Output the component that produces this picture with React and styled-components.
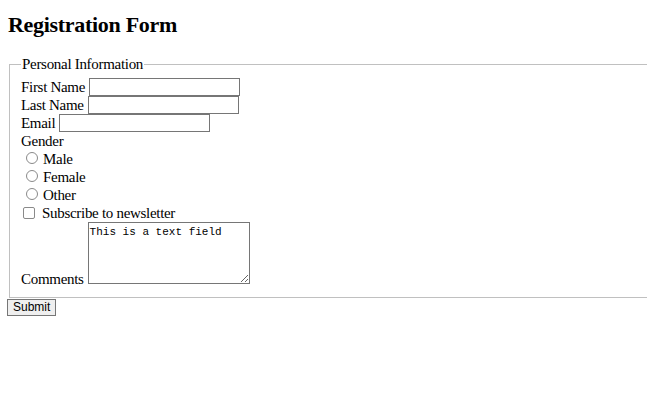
import React from 'react'
import styled, {createGlobalStyle} from 'styled-components'

const Global = createGlobalStyle`
  html, body{
    margin: 0;
    background: #ffffff;
    overflow: hidden;
  }
  body{
    padding: 12px 0 0 7px;
    font-family: "Liberation Serif", "Times New Roman", serif;
    font-size: 15px;
    letter-spacing: -0.3px;
    color: #000000;
  }
`
const Title = styled.h2`
  margin: 0 0 17px 1px;
  font-size: 22px;
  line-height: 26px;
  font-weight: 700;
  letter-spacing: -0.3px;
`
const Fieldset = styled.fieldset`
  width: 700px;
  margin: 0 0 0 2px;
  padding: 5px 11px 13px 11px;
  border: 1px solid #c0c0c0;
  border-right: none;
  box-sizing: border-box;
`
const Legend = styled.legend`
  padding: 0 1px;
  line-height: 18px;
`
const Row = styled.div`
  display: flex;
  align-items: ${p => p.$bottom ? 'flex-end' : 'center'};
  gap: 4px;
  min-height: 18px;
  line-height: 18px;
`
const TextInput = styled.input`
  box-sizing: border-box;
  width: ${p => p.$w || 151}px;
  height: 18px;
  margin: 0;
  padding: 0 2px;
  border: 1px solid #767676;
  font: inherit;
  background: #fff;
`
const Choice = styled.label`
  display: flex;
  align-items: flex-start;
  height: 18px;
  line-height: 18px;
  padding-left: ${p => p.$box ? 2 : 5}px;
  gap: ${p => p.$box ? 7 : 5}px;
`
const Radio = styled.input`
  appearance: none;
  box-sizing: border-box;
  flex: none;
  width: 12px;
  height: 12px;
  margin: 2px 0 0 0;
  border: 1px solid #8a8a8a;
  border-radius: 50%;
  background: #fff;
`
const Check = styled(Radio)`
  margin-top: 3px;
  border-radius: 2px;
`
const Comments = styled.textarea`
  box-sizing: border-box;
  width: 162px;
  height: 62px;
  margin: 0;
  padding: 3px 1px;
  border: 1px solid #767676;
  font-family: "Liberation Mono", "Courier New", monospace;
  font-size: 11px;
  line-height: 13px;
  letter-spacing: 0;
  resize: both;
`
const Label = styled.span`
  line-height: 18px;
  margin-bottom: ${p => p.$bottom ? '-4px' : '0'};
`
const SubmitButton = styled.button`
  display: block;
  margin: 1px 0 0 0;
  height: 17px;
  padding: 0 5px;
  border: 1px solid #767676;
  border-radius: 0;
  background: #efefef;
  font-family: "Liberation Sans", Arial, sans-serif;
  font-size: 12px;
  line-height: 15px;
  letter-spacing: 0;
  color: #000;
`

export default function App(){
  return(
    <>
      <Global/>
      <Title>Registration Form</Title>
      <form onSubmit={e => e.preventDefault()}>
        <Fieldset>
          <Legend>Personal Information</Legend>
          <Row>
            <Label>First Name</Label>
            <TextInput type="text" name="firstName"/>
          </Row>
          <Row>
            <Label>Last Name</Label>
            <TextInput type="text" name="lastName"/>
          </Row>
          <Row>
            <Label>Email</Label>
            <TextInput type="email" name="email"/>
          </Row>
          <Row>
            <Label>Gender</Label>
          </Row>
          <Choice><Radio type="radio" name="gender" value="male"/>Male</Choice>
          <Choice><Radio type="radio" name="gender" value="female"/>Female</Choice>
          <Choice><Radio type="radio" name="gender" value="other"/>Other</Choice>
          <Choice $box><Check type="checkbox" name="newsletter"/>Subscribe to newsletter</Choice>
          <Row $bottom>
            <Label $bottom>Comments</Label>
            <Comments name="comments" defaultValue="This is a text field"/>
          </Row>
        </Fieldset>
        <SubmitButton type="submit">Submit</SubmitButton>
      </form>
    </>
  )
}
